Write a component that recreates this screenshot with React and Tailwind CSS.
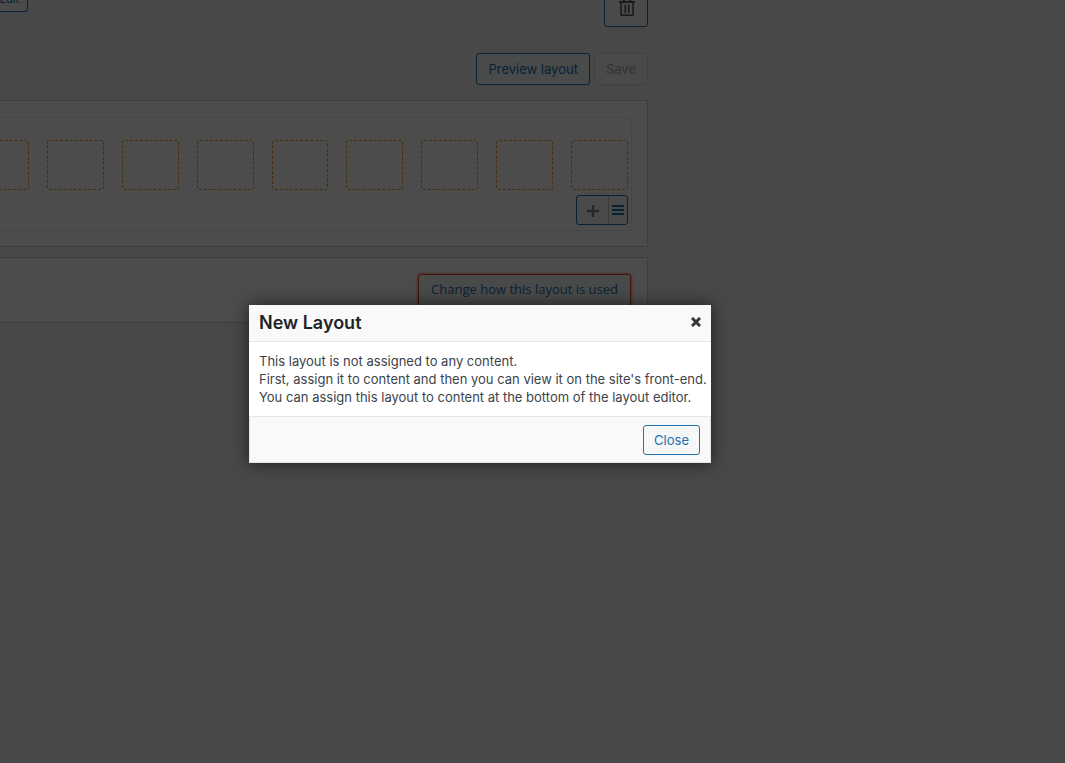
import React from "react";

const cells = [1, 2, 3, 4, 5, 6, 7, 8, 9];

function TrashIcon() {
  return (
    <svg width="18" height="22" viewBox="0 0 18 22" fill="none" stroke="#50575e" aria-hidden="true">
      <path d="M1 6H17M6 5V2H12V5" strokeWidth="2" />
      <path d="M3 6V19.2H15V6" strokeWidth="1.6" strokeLinejoin="round" />
      <path d="M7.3 8.5V17M10.7 8.5V17" strokeWidth="1.6" />
    </svg>
  );
}

function CloseIcon() {
  return (
    <svg width="10" height="10" viewBox="0 0 10 10" stroke="#32373c" strokeWidth="3" aria-hidden="true">
      <path d="M1 1L9 9M9 1L1 9" />
    </svg>
  );
}

function TopBar() {
  return (
    <div className="-mt-[14px] flex items-start justify-between">
      <button className="-ml-3 h-[26px] w-10 rounded-[3px] border border-[#2271b1] bg-[#f6f7f7] pr-2 text-right text-[11px] text-[#2271b1]">
        Edit
      </button>
      <button
        aria-label="Delete layout"
        className="flex h-[41px] w-11 items-center justify-center rounded-[3px] border border-[#2271b1] bg-[#f6f7f7] pl-[2px]"
      >
        <TrashIcon />
      </button>
    </div>
  );
}

function LayoutPanel() {
  return (
    <section className="mt-[15px] border-y border-r border-[#cfd0d2] bg-white pt-4 pr-[15px] pb-[15px]">
      <div className="rounded-r-[3px] border-y border-r border-[#e9e9e9] pt-[22px] pr-[3px] pb-[5px]">
        <div className="-ml-7 grid grid-cols-9 gap-[18px]">
          {cells.map((n) => (
            <div key={n} className="h-[50px] rounded-[3px] border border-dashed border-[#f29b1d]" />
          ))}
        </div>
        <div className="mt-[5px] flex justify-end">
          <div className="flex h-[30px] w-[52px] rounded-[3px] border border-[#2271b1] bg-[#f6f7f7]">
            <button aria-label="Add row" className="flex w-8 items-center justify-center border-r border-[#c3c4c7] pt-[2px]">
              <svg width="12" height="12" viewBox="0 0 12 12" stroke="#82878c" strokeWidth="2.4" aria-hidden="true">
                <path d="M6 0V12M0 6H12" />
              </svg>
            </button>
            <button aria-label="Row types" className="flex flex-1 items-center justify-center">
              <svg width="12" height="10" viewBox="0 0 12 10" stroke="#2271b1" strokeWidth="2" aria-hidden="true">
                <path d="M0 1H12M0 5H12M0 9H12" />
              </svg>
            </button>
          </div>
        </div>
      </div>
    </section>
  );
}

function NewLayoutDialog() {
  return (
    <div
      role="dialog"
      aria-modal="true"
      aria-labelledby="dialog-title"
      className="absolute top-[305px] left-[249px] w-[462px] bg-white shadow-[0_0_16px_rgba(0,0,0,0.6)]"
    >
      <header className="flex h-[37px] items-center justify-between border-b border-[#e5e5e5] bg-[#f9f9f9] px-[10px]">
        <h2 id="dialog-title" className="text-[18px] leading-6 font-semibold text-[#1d2327]">
          New Layout
        </h2>
        <button aria-label="Close dialog" className="mb-[3px]">
          <CloseIcon />
        </button>
      </header>
      <div className="px-[10px] py-[10px] text-[13px] leading-[18px] whitespace-nowrap text-[#3c434a]">
        <p>This layout is not assigned to any content.</p>
        <p>First, assign it to content and then you can view it on the site's front-end.</p>
        <p>You can assign this layout to content at the bottom of the layout editor.</p>
      </div>
      <footer className="flex justify-end border border-[#e5e5e5] bg-[#f9f9f9] px-[10px] pt-2 pb-[7px]">
        <button className="h-[30px] rounded-[3px] border border-[#2271b1] bg-[#f6f7f7] px-[10px] pt-[2px] text-[13px] text-[#2271b1]">
          Close
        </button>
      </footer>
    </div>
  );
}

export default function App() {
  return (
    <div className="relative min-h-screen overflow-hidden bg-[#f0f0f1] font-['Inter',sans-serif] text-[13px]">
      <main className="w-[648px] max-w-full">
        <TopBar />
        <div className="mt-[26px] flex justify-end gap-1">
          <button className="h-8 rounded-[3px] border border-[#2271b1] bg-[#f6f7f7] px-[11px] pt-[2px] text-[#2271b1]">
            Preview layout
          </button>
          <button disabled className="h-8 rounded-[3px] border border-[#dcdcde] bg-[#f6f7f7] px-[11px] pt-[2px] text-[#a7aaad]">
            Save
          </button>
        </div>
        <LayoutPanel />
        <section className="mt-[10px] flex justify-end border-y border-r border-[#cfd0d2] bg-white py-4 pr-4">
          <button className="h-8 rounded-[3px] border border-[#f0401c] bg-[#f6f7f7] px-3 font-['Open_Sans',sans-serif] text-[#2271b1] shadow-[0_0_3px_#f0401c]">
            Change how this layout is used
          </button>
        </section>
      </main>
      <div className="absolute inset-0 bg-black/70" />
      <NewLayoutDialog />
    </div>
  );
}
